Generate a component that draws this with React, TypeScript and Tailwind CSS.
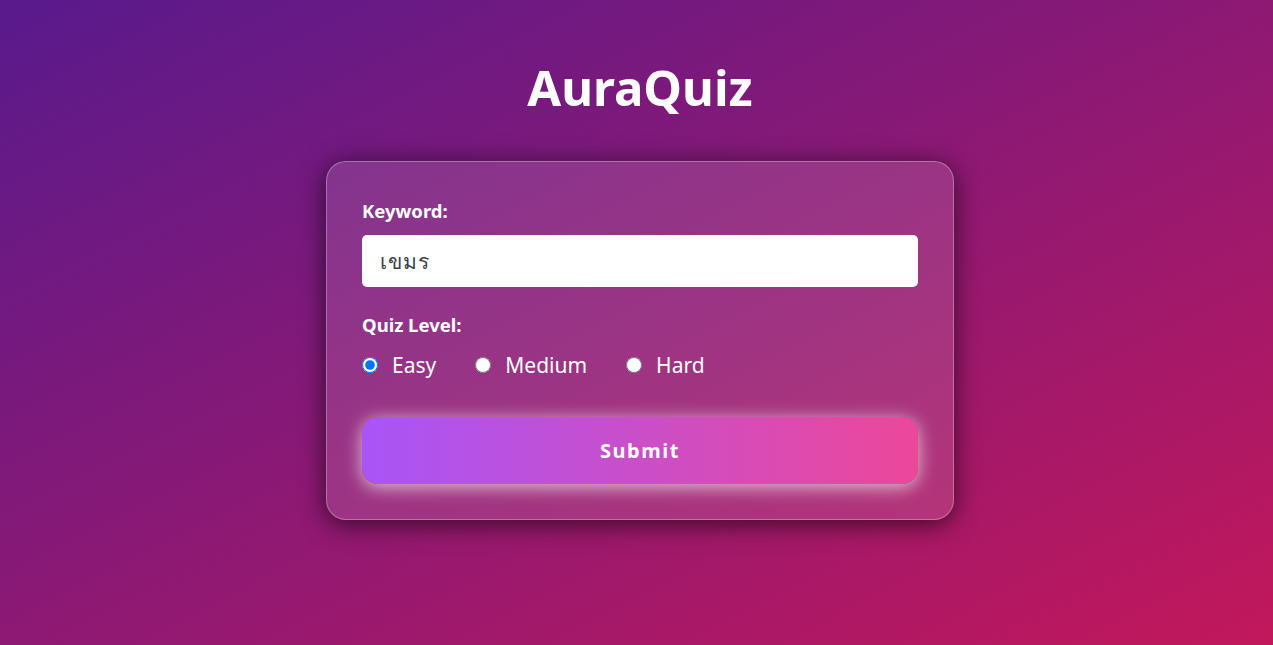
import { useState } from "react";

const levels = ["Easy", "Medium", "Hard"];

export default function App() {
  const [keyword, setKeyword] = useState("เขมร");
  const [level, setLevel] = useState("Easy");

  return (
    <div
      className="min-h-screen w-full bg-[linear-gradient(to_bottom_right,#581a8c_0%,#c2185b_100%)] pt-[54px] pl-[7px] text-white"
      style={{ fontFamily: '"Noto Sans", "Open Sans", sans-serif' }}
    >
      <h1 className="mb-[40px] text-center text-[49px] font-bold leading-[67px]">AuraQuiz</h1>

      <form
        className="mx-auto w-[628px] rounded-[20px] border border-white/30 bg-white/12 px-[35px] py-[35px] shadow-[0_4px_26px_rgba(0,0,0,0.65)]"
        onSubmit={(e) => e.preventDefault()}
      >
        <label htmlFor="keyword" className="mb-[11px] block text-[18.5px] font-bold leading-[27px]">
          Keyword:
        </label>
        <input
          id="keyword"
          type="text"
          value={keyword}
          onChange={(e) => setKeyword(e.target.value)}
          className="block h-[52px] w-full rounded-[5px] bg-white px-[18px] text-[21px] tracking-[1px] text-[#3b3f4a] outline-none"
        />

        <div className="mt-[24px] mb-[12px] text-[18.5px] font-bold leading-[27px]">Quiz Level:</div>
        <div className="flex items-center gap-[39px]">
          {levels.map((l) => (
            <label key={l} className="flex cursor-pointer items-center gap-[14px] text-[21px] leading-[30px]">
              <input
                type="radio"
                name="level"
                value={l}
                checked={level === l}
                onChange={() => setLevel(l)}
                className="m-0 h-[16px] w-[16px] accent-[#0075ff]"
              />
              {l}
            </label>
          ))}
        </div>

        <button
          type="submit"
          className="mt-[37px] block h-[67px] w-full rounded-[16px] bg-[linear-gradient(90deg,#a855f7,#ec4899)] text-[20px] font-bold tracking-[1.5px] text-white shadow-[0_3px_18px_rgba(255,255,255,0.7)]"
        >
          Submit
        </button>
      </form>
    </div>
  );
}
